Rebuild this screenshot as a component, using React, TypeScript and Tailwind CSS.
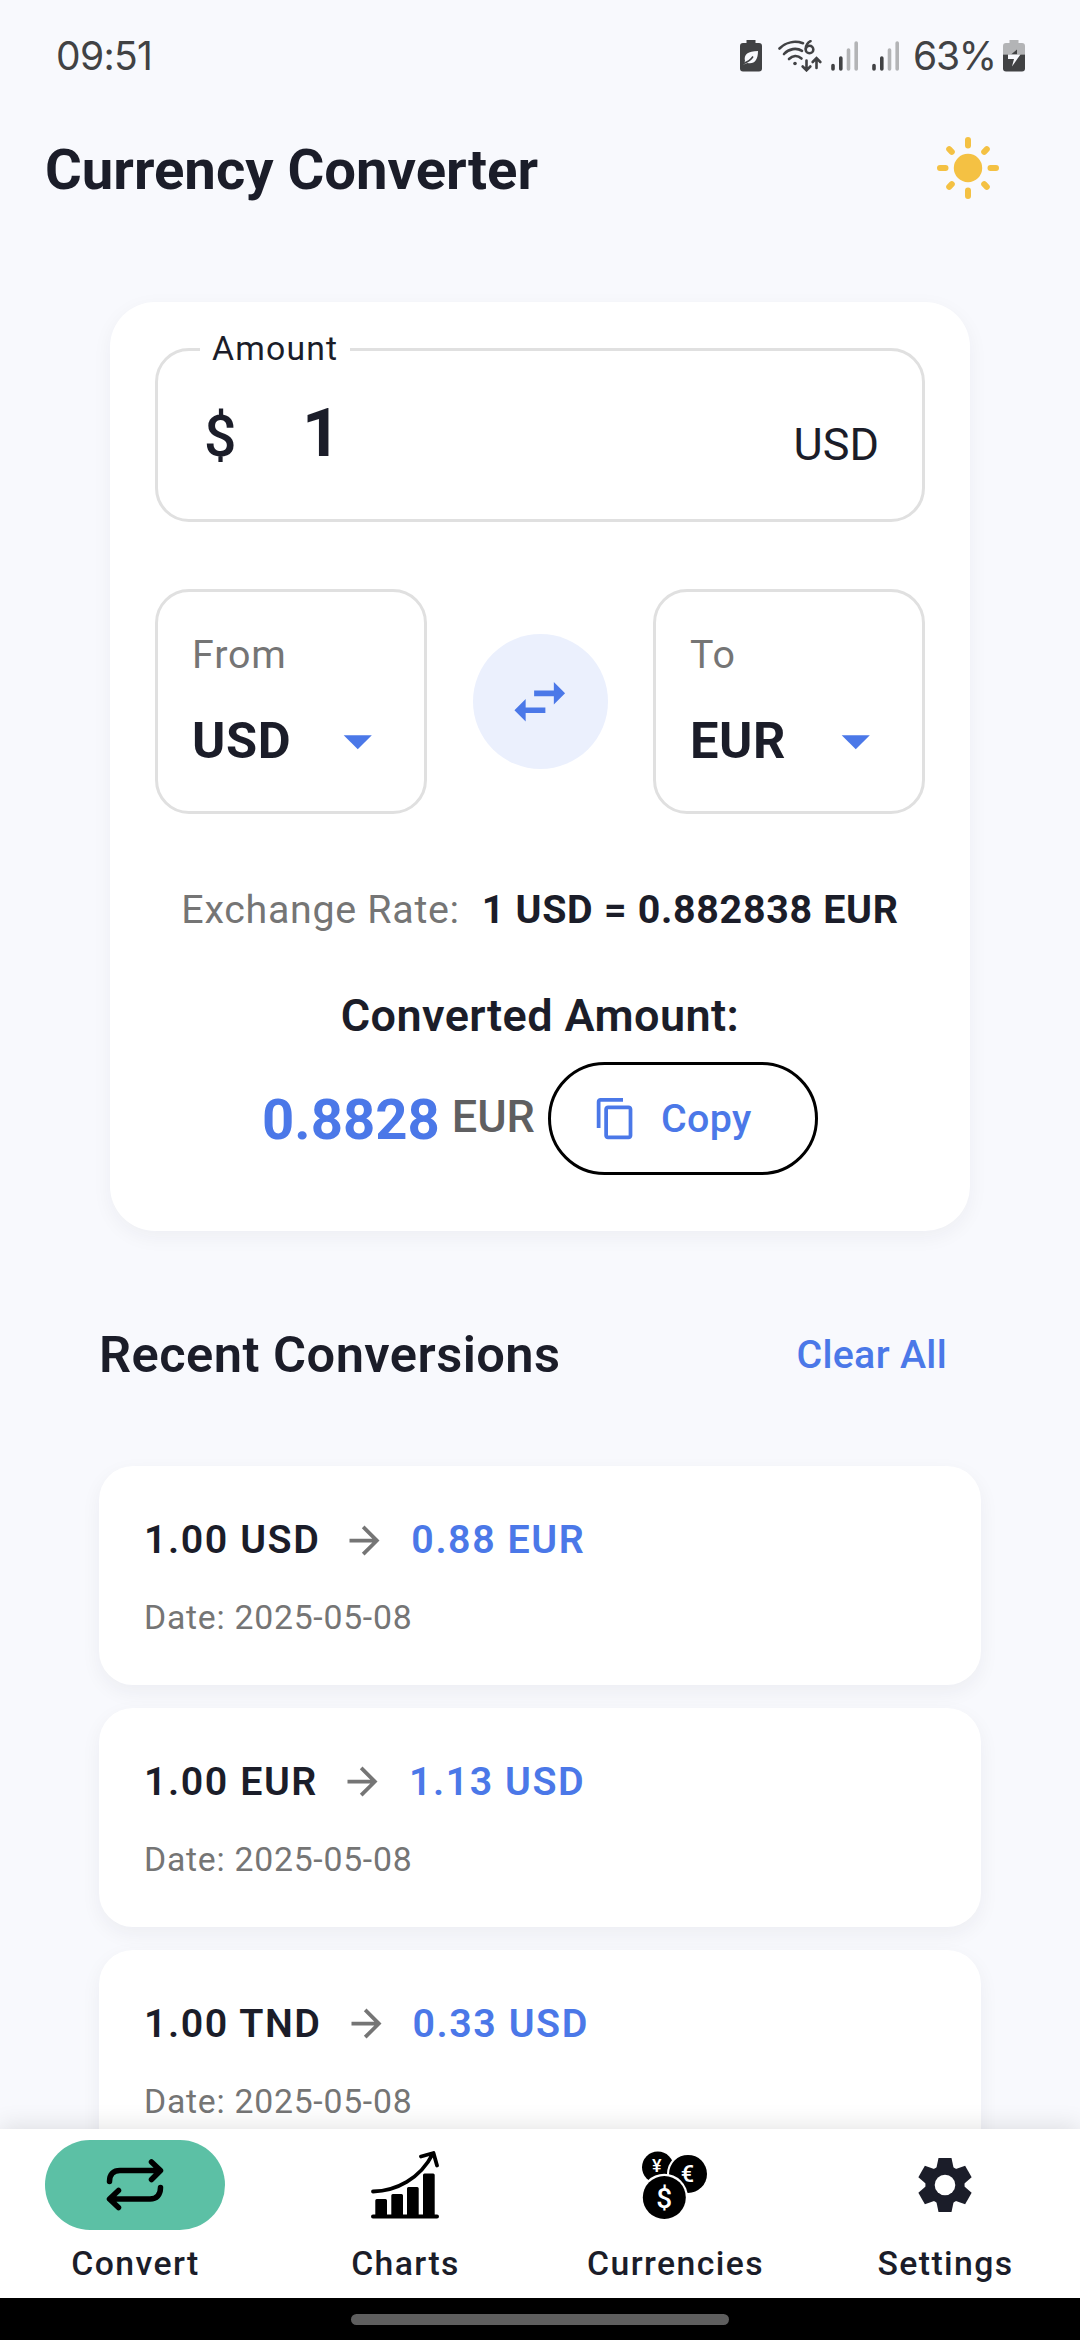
import type { ReactNode } from "react";
import { MdArrowDropDown, MdArrowForward, MdContentCopy, MdSwapHoriz } from "react-icons/md";

function PowerSaveBattery() {
  return (
    <svg width="22" height="32" viewBox="0 0 22 32">
      <path d="M6.500 0h9v3H19a3 3 0 0 1 3 3v22.500a3 3 0 0 1-3 3H3a3 3 0 0 1-3-3V6a3 3 0 0 1 3-3h3.500z" fill="#414244" />
      <path d="M5 21C3.500 14.500 8 11 18 11c0 9-3.500 13.500-10.500 12L3.500 24.500z" fill="#f8f9fd" />
      <path d="M3 23.800c4-1.500 8-4 10-7.300" stroke="#414244" strokeWidth="1.500" fill="none" />
    </svg>
  );
}

function Wifi() {
  return (
    <svg width="44" height="32" viewBox="0 0 44 32" fill="none" stroke="#414244" strokeWidth="2.600" strokeLinecap="round">
      <path d="M1.500 8.500C8 2 17 .5 25 3.200" />
      <path d="M6 14c5-5.500 12.500-6.500 18-3.200" />
      <path d="M11 19c3.500-3.500 8.500-4 12.500-.5" />
      <circle cx="17" cy="23.500" r="1.800" fill="#414244" stroke="none" />
      <circle cx="31.500" cy="9.500" r="3.800" />
      <path d="M27.800 8.500C28 5.500 30 2.500 32.500 1.200" />
      <path d="M28.500 20.500v9.500m-3.800-3.500 3.800 3.800 3.800-3.800M38.500 28v-9.500m-3.800 3.500 3.800-3.800 3.800 3.800" />
    </svg>
  );
}

function Signal() {
  return (
    <svg width="28" height="30" viewBox="0 0 28 30" strokeWidth="3.600" strokeLinecap="round">
      <path d="M2 24.500v3.500M9.800 17v11" stroke="#414244" />
      <path d="M17.500 9v19M25.200 2v26" stroke="#b3b4b6" />
    </svg>
  );
}

function ChargingBattery() {
  return (
    <svg width="22" height="32" viewBox="0 0 22 32">
      <path d="M6.500 0h9v3H19a3 3 0 0 1 3 3v8.500H0V6a3 3 0 0 1 3-3h3.500z" fill="#b3b4b6" />
      <path d="M0 14.500h22v14a3 3 0 0 1-3 3H3a3 3 0 0 1-3-3z" fill="#414244" />
      <path d="M14 9.500 8 14.500h6z" fill="#414244" />
      <path d="M5 14.500h12.500L9 26.500l2-7.500H5z" fill="#f8f9fd" />
    </svg>
  );
}

function Sun() {
  return (
    <svg width="64" height="64" viewBox="-32 -32 64 64" stroke="#f4c143" strokeWidth="6" strokeLinecap="round">
      <circle r="14.200" fill="#f4c143" stroke="none" />
      <path d="M0-28v5.500M0 28v-5.500M-28 0h5.500M28 0h-5.500M-18.800-18.800l2.600 2.600M18.800-18.800l-2.600 2.600M-18.800 18.800l2.600-2.600M18.800 18.800l-2.600-2.600" />
    </svg>
  );
}

function ConvertIcon() {
  return (
    <svg width="58" height="52" viewBox="0 0 58 52" fill="none" stroke="#000" strokeWidth="5.500" strokeLinecap="round" strokeLinejoin="round">
      <path d="M3.500 22.500C3.500 15 7.500 11.500 14 11.500h40M45.500 3l9 8.500-9 9" />
      <path d="M54.500 28.500c0 7.500-4 11.500-10.500 11.500H4M12.500 31.500 3.500 40l9 8.500" />
    </svg>
  );
}

function ChartsIcon() {
  return (
    <svg width="68" height="68" viewBox="0 0 68 68">
      <path d="M2 65.500h64" stroke="#000" strokeWidth="4" strokeLinecap="round" />
      <path d="M4.300 49.500a1.500 1.500 0 0 1 1.500-1.500h8.700a1.500 1.500 0 0 1 1.500 1.500V66H4.300zM20.300 44.500a1.500 1.500 0 0 1 1.500-1.500h8.700a1.500 1.500 0 0 1 1.500 1.500V66H20.300zM36 37.500a1.500 1.500 0 0 1 1.500-1.500h8.700a1.500 1.500 0 0 1 1.500 1.500V66H36zM52 24a1.500 1.500 0 0 1 1.500-1.500h8.700a1.500 1.500 0 0 1 1.500 1.500v42H52z" />
      <path d="M2 40.500C25 40 49 28 62 2.500M50 5.500l12.500-3.500 3.500 12.500" fill="none" stroke="#000" strokeWidth="3.800" strokeLinecap="round" strokeLinejoin="round" />
    </svg>
  );
}

function CurrenciesIcon() {
  return (
    <svg width="66" height="69" viewBox="0 0 66 69" fontFamily="Roboto, sans-serif" fontWeight="500" textAnchor="middle">
      <circle cx="15.800" cy="16.300" r="15.800" />
      <circle cx="46" cy="22.900" r="21" fill="#fff" />
      <circle cx="46" cy="22.900" r="19" />
      <circle cx="22.300" cy="46.500" r="23.700" fill="#fff" />
      <circle cx="22.300" cy="46.500" r="21.500" />
      <text x="14.800" y="20.700" fontSize="18" fill="#fff">¥</text>
      <text x="45.500" y="31" fontSize="23.500" fill="#fff">€</text>
      <text x="22.300" y="56.500" fontSize="28" fill="#fff">$</text>
    </svg>
  );
}

function SettingsIcon() {
  return (
    <svg width="54" height="54" viewBox="-27 -27 54 54">
      <g fill="#1b1d29">
        <circle r="19.600" />
        {[0, 60, 120, 180, 240, 300].map((angle) => (
          <path key={angle} transform={`rotate(${angle})`} d="M-6.500-27h13L8.800-16H-8.800z" />
        ))}
      </g>
      <circle r="10.300" fill="#fff" />
    </svg>
  );
}

function CurrencyBox({ label, code }: { label: string; code: string }) {
  return (
    <div className="h-[225px] w-[272px] rounded-[34px] border-[3px] border-[#e0e0e0] pl-[34px] pt-[35px]">
      <div className="text-[39.375px] leading-[56px] tracking-[0.9px] text-[#757575]">{label}</div>
      <div className="mt-[24px] flex h-[68px] items-center">
        <span className="w-[132px] text-[50.625px] font-bold leading-[68px] tracking-[0.6px]">{code}</span>
        <MdArrowDropDown className="size-[67.5px] text-[#4b78e8]" />
      </div>
    </div>
  );
}

const history = [
  { from: "1.00 USD", to: "0.88 EUR" },
  { from: "1.00 EUR", to: "1.13 USD" },
  { from: "1.00 TND", to: "0.33 USD" },
];

function NavItem({ label, icon, active }: { label: string; icon: ReactNode; active?: boolean }) {
  return (
    <div className="flex w-[270px] flex-col items-center pt-[11px]">
      <div className={active ? "flex h-[90px] w-[180px] items-center justify-center rounded-full bg-[#5cc0a5]" : "flex h-[90px] w-[180px] items-center justify-center"}>
        {icon}
      </div>
      <div className="mt-[11px] pl-[1px] text-[33.75px] font-medium leading-[45px] tracking-[1.4px]">{label}</div>
    </div>
  );
}

export default function App() {
  return (
    <div className="flex h-[2340px] w-[1080px] flex-col overflow-hidden bg-[#f8f9fd] font-[Roboto,sans-serif] text-[#1b1d29]">
      <div className="flex h-[112px] shrink-0 items-center pl-[56px] pr-[55px] font-[Inter,sans-serif] text-[39px] font-normal text-[#414244]">
        <span className="tracking-[-0.7px]">09:51</span>
        <div className="ml-auto flex items-center">
          <PowerSaveBattery />
          <div className="ml-[16px]"><Wifi /></div>
          <div className="ml-[9px]"><Signal /></div>
          <div className="ml-[13px]"><Signal /></div>
          <span className="ml-[13px] w-[85px] whitespace-nowrap tracking-[-1.2px]">63%</span>
          <div className="ml-[5px]"><ChargingBattery /></div>
        </div>
      </div>

      <header className="flex h-[112px] shrink-0 items-center justify-between pl-[45px] pr-[80px]">
        <h1 className="pt-[3px] text-[56.25px] font-bold leading-[68px]">Currency Converter</h1>
        <Sun />
      </header>

      <main className="flex min-h-0 flex-1 flex-col overflow-hidden pt-[78px]">
        <section className="mx-auto h-[929px] w-[860px] shrink-0 rounded-[45px] bg-white px-[45px] pt-[30px] shadow-[0_6px_20px_rgba(30,30,60,0.05)]">
          <fieldset className="h-[190px] rounded-[34px] border-[3px] border-[#e0e0e0] pl-[42px] pr-[43px]">
            <legend className="px-[12px] text-[33.75px] leading-[34px] tracking-[1.2px]">Amount</legend>
            <div className="flex items-end pl-[4px] pt-[27px]">
              <span className="flex items-baseline leading-[80px]">
                <span className="w-[98px] text-[57px] font-medium">$</span>
                <span className="text-[67.5px] font-bold">1</span>
              </span>
              <span className="ml-auto text-[45px] leading-[65px]">USD</span>
            </div>
          </fieldset>

          <div className="mt-[67px] flex items-center justify-between">
            <CurrencyBox label="From" code="USD" />
            <button className="flex size-[135px] items-center justify-center rounded-full bg-[#ebf0fd]">
              <MdSwapHoriz className="size-[67.5px] text-[#4b78e8]" />
            </button>
            <CurrencyBox label="To" code="EUR" />
          </div>

          <div className="mt-[68px] flex items-center justify-center gap-[22px] text-[39.375px] leading-[56px]">
            <span className="tracking-[0.7px] text-[#757575]">Exchange Rate:</span>
            <span className="font-bold tracking-[0.7px]">1 USD = 0.882838 EUR</span>
          </div>
          <div className="mt-[44px] text-center text-[45px] font-semibold leading-[68px] tracking-[0.42px]">Converted Amount:</div>
          <div className="mt-[12px] flex h-[113px] items-center justify-center">
            <span className="mt-[2px] text-[56.25px] font-bold leading-[68px] text-[#4b78e8]">0.8828</span>
            <span className="ml-[12px] mt-[-3px] text-[45px] font-medium leading-[68px] text-[#5f5f61]">EUR</span>
            <button className="ml-[13px] flex h-[113px] w-[270px] items-center rounded-full border-[3px] border-black pl-[42px] text-[#4b78e8]">
              <MdContentCopy className="size-[45px]" />
              <span className="ml-[23px] text-[39.375px] font-medium tracking-[0.4px]">Copy</span>
            </button>
          </div>
        </section>

        <div className="mt-[68px] flex h-[112px] shrink-0 items-center justify-between pl-[99px] pr-[133px]">
          <h2 className="text-[50.625px] font-semibold leading-[68px] tracking-[0.45px]">Recent Conversions</h2>
          <button className="text-[39.375px] font-medium leading-[56px] tracking-[0.3px] text-[#4b78e8]">Clear All</button>
        </div>

        <div className="mt-[55px] flex shrink-0 flex-col gap-[22.5px] px-[99px]">
          {history.map((h) => (
            <div key={h.from} className="h-[219.375px] rounded-[34px] bg-white px-[45px] pt-[46px] shadow-[0_7px_20px_rgba(30,30,60,0.055)]">
              <div className="flex h-[56px] items-center text-[39.375px] font-semibold leading-[56px] tracking-[1.55px]">
                <span>{h.from}</span>
                <MdArrowForward className="ml-[22px] mr-[24px] size-[45px] text-[#757575]" />
                <span className="text-[#4b78e8]">{h.to}</span>
              </div>
              <div className="mt-[27px] text-[33.75px] leading-[45px] tracking-[0.75px] text-[#757575]">Date: 2025-05-08</div>
            </div>
          ))}
        </div>
      </main>

      <nav className="relative flex h-[169px] shrink-0 bg-white shadow-[0_-4px_22px_rgba(0,0,0,0.10)]">
        <NavItem label="Convert" icon={<ConvertIcon />} active />
        <NavItem label="Charts" icon={<ChartsIcon />} />
        <NavItem label="Currencies" icon={<CurrenciesIcon />} />
        <NavItem label="Settings" icon={<SettingsIcon />} />
      </nav>
      <div className="relative flex h-[42px] shrink-0 justify-center bg-black pt-[16px]">
        <div className="h-[11px] w-[378px] rounded-full bg-[#5e5e5e]" />
      </div>
    </div>
  );
}
